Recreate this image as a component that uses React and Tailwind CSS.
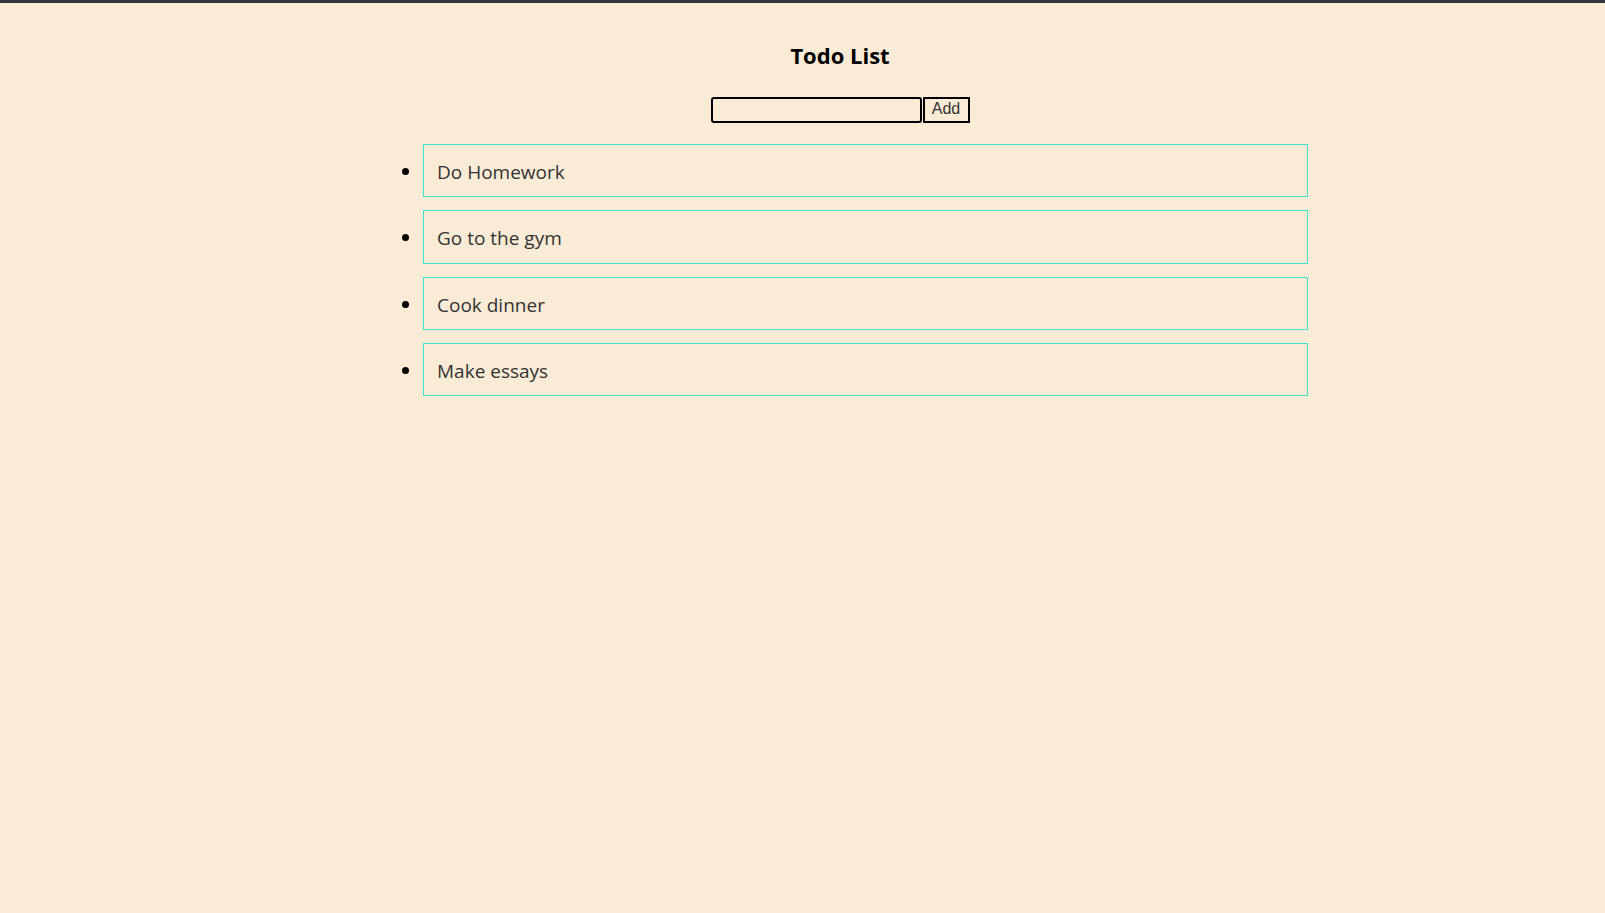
export default function App() {
  const items = ["Do Homework", "Go to the gym", "Cook dinner", "Make essays"];
  return (
    <div className="min-h-[913px] bg-[#faebd7] border-t-[3px] border-[#36373b]" style={{ fontFamily: '"Open Sans", "Noto Sans", sans-serif' }}>
      <div className="pl-[75px] pt-[37px] flex flex-col items-center">
        <h2 className="text-[22px] font-bold text-black leading-[30px]">Todo List</h2>
        <div className="mt-[27px] flex">
          <input
            type="text"
            className="w-[211px] h-[26px] border-2 border-black rounded-[3px] bg-transparent outline-none px-1"
          />
          <button
            className="ml-px w-[47px] h-[26px] border-2 border-black bg-transparent text-[16px] text-[#333] leading-none pb-[2px]"
            style={{ fontFamily: '"Liberation Sans", Arial, sans-serif' }}
          >
            Add
          </button>
        </div>
      </div>
      <ul className="list-disc ml-[383px] w-[925px] pl-[40px] mt-[21px]">
        {items.map((t) => (
          <li key={t} className="mb-[13px] text-[20px] text-black">
            <div className="border border-[#40e0d0] pl-[13px] pr-3 pt-[14px] pb-[10px] text-[#333] leading-[27.33px] text-[19px]">
              {t}
            </div>
          </li>
        ))}
      </ul>
    </div>
  );
}
